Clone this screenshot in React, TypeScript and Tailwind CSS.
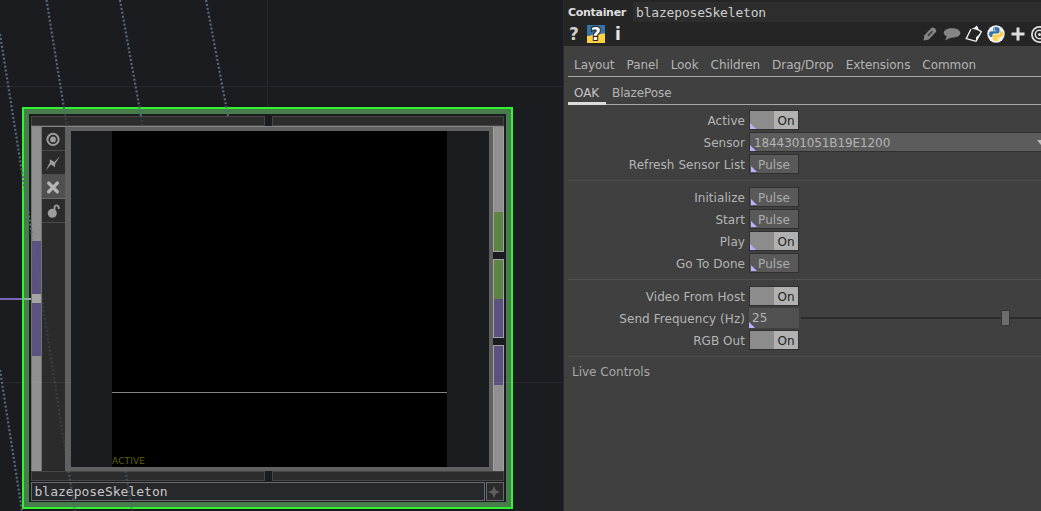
import type { ReactNode } from 'react';

const pages = ['Layout', 'Panel', 'Look', 'Children', 'Drag/Drop', 'Extensions', 'Common'];

// Wires that run behind and across the node
const wires = [
  { d: 'M0 34L32 235', opacity: 1 },
  { d: 'M32 235L66 455', opacity: 0.3 },
  { d: 'M66 455L75 511', opacity: 0.65 },
  { d: 'M0 370L22 511', opacity: 1 },
  { d: 'M46.5 0L65 114', opacity: 1 },
  { d: 'M65 114L70 147', opacity: 0.4 },
  { d: 'M125 467L132 511', opacity: 0.55 },
  { d: 'M120 0L141 116', opacity: 1 },
  { d: 'M141 116L143 130', opacity: 0.3 },
  { d: 'M206 0L228 116', opacity: 1 },
];

function Network() {
  return (
    <svg className="absolute inset-0" width="563" height="511" fill="none">
      <path d="M0 86.5H563M0 382.5H22M513 382.5H563M267.5 0V107" stroke="#27272f" />
      <path d="M31 382.5H71M489 382.5H513" stroke="#fff" strokeOpacity="0.06" />
      {wires.map((w) => (
        <path key={w.d} d={w.d} stroke="#586976" strokeWidth="2.2" strokeDasharray="2 2" opacity={w.opacity} />
      ))}
      <path d="M0 299H22" stroke="#7b64b4" strokeWidth="2" />
      <path d="M24 299H31" stroke="#8fa8ae" strokeWidth="2" />
    </svg>
  );
}

function Flag({ active, children }: { active?: boolean; children: ReactNode }) {
  return (
    <div className={`flex h-6 items-center justify-center border-b pr-[2px] ${active ? 'border-[#6a6a6a] bg-[#505050]' : 'border-[#4b4b4b] bg-[#2b2b2b]'}`}>
      <svg width="16" height="16" viewBox="0 0 16 16" fill="none">{children}</svg>
    </div>
  );
}

function BarPair() {
  return (
    <div className="flex h-[10px] gap-[7px]">
      <div className="w-[234px] border border-[#464646] bg-[#2c2c2c]" />
      <div className="flex-1 border border-[#464646] bg-[#2c2c2c]" />
    </div>
  );
}

function Node() {
  return (
    <div className="absolute left-[22px] top-[107px] flex h-[402px] w-[491px] flex-col border-2 border-[#32f332] bg-[#467d4b] p-[5px]">
      <div className="flex min-h-0 flex-1 flex-col bg-[#1b1c20] pt-[2px] pr-[2px] pb-[1px] pl-[2px]">
        <BarPair />
        <div className="flex h-[345px] border-t border-[#858585]">
          <div className="flex w-[11px] flex-col border-x border-[#737373] bg-[#909090]">
            <div className="mt-[114px] h-[53px] bg-[#5b5280]" />
            <div className="h-[9px] bg-[#a5a5a5]" />
            <div className="h-[53px] bg-[#5b5280]" />
          </div>
          <div className="w-[23px] bg-[#2b2b2b]">
            <Flag>
              <circle cx="8" cy="8.4" r="5.6" stroke="#9d9d9d" strokeWidth="2" />
              <circle cx="8" cy="8.4" r="2.9" fill="#9d9d9d" />
            </Flag>
            <Flag>
              <path d="M15.2 1L10.2 8.8L10 12.2L6 9.4L0.8 15.6L4.8 7.6V4.2L9.4 7Z" fill="#9d9d9d" />
            </Flag>
            <Flag active>
              <path d="M3.7 4.1L12.3 12.7M12.3 4.1L3.7 12.7" stroke="#b5b5b5" strokeWidth="3.4" strokeLinecap="round" />
            </Flag>
            <Flag>
              <circle cx="7.3" cy="10.3" r="4.5" fill="#9d9d9d" />
              <path d="M9.5 7.5V4.5Q9.7 2.3 11.8 2.4Q14 2.6 13.8 6" stroke="#9d9d9d" strokeWidth="1.8" />
            </Flag>
          </div>
          <div className="flex flex-1 border-x-[5px] border-y-[4px] border-r-[4px] border-l-[6px] border-[#606060] bg-[#1b1c20] pl-[41px]">
            <div className="flex w-[335px] flex-col bg-black">
              <div className="h-[261px]" />
              <div className="h-px bg-[#858585]" />
              <span className="mt-[63px] font-['DejaVu_Sans'] text-[9px] leading-[10px] tracking-[0.15px] text-[#626200]">ACTIVE</span>
            </div>
          </div>
          <div className="flex w-[11px] flex-col">
            <div className="h-[85px] border-x border-[#a2a2a2] bg-[#909090]" />
            <div className="h-10 border border-t-0 border-[#a2a2a2] bg-[#5f8546]" />
            <div className="h-[7px]" />
            <div className="h-10 border border-b-0 border-[#a2a2a2] bg-[#5f8546]" />
            <div className="h-[39px] border border-t-0 border-[#a2a2a2] bg-[#5b5280]" />
            <div className="h-[7px]" />
            <div className="h-10 border border-b-0 border-[#a2a2a2] bg-[#5b5280]" />
            <div className="flex-1 border-x border-[#a2a2a2] bg-[#909090]" />
          </div>
        </div>
        <BarPair />
        <div className="mt-px flex h-[19px] gap-px">
          <div className="flex flex-1 items-center border border-[#6b6b6f] bg-[#27282b] pl-[2.5px] font-['DejaVu_Sans_Mono'] text-[13px] leading-none text-[#c8c8c8]">
            blazeposeSkeleton
          </div>
          <div className="flex w-[18px] items-center justify-center border border-[#6b6b6f] bg-[#2b2b2b] pr-[2px]">
            <svg width="12" height="12" viewBox="0 0 12 12">
              <path d="M6 0L7.8 4.2L12 6L7.8 7.8L6 12L4.2 7.8L0 6L4.2 4.2Z" fill="#606060" />
            </svg>
          </div>
        </div>
      </div>
    </div>
  );
}

function PythonMark() {
  return (
    <svg width="18" height="18" viewBox="0 0 18 18">
      <circle cx="9" cy="9" r="8.7" fill="#f1f1f1" />
      <path d="M9 2C6.3 2 6 3.2 6 4.3V5.5H9.3V6.2H4.5C2.8 6.2 2 7.5 2 9S2.7 12 4.3 12H5.4V10.4C5.4 9 6.5 8.4 7.5 8.4H10.6C11.8 8.4 12.5 7.5 12.5 6.5V4.2C12.5 2.7 11 2 9 2Z" fill="#3572a5" />
      <path d="M9.2 16C11.9 16 12.2 14.8 12.2 13.7V12.5H8.9V11.9H13.7C15.4 11.9 16.2 10.6 16.2 9.1S15.5 6.1 13.9 6.1H13V7.6C13 9 11.9 9.6 10.9 9.6H7.8C6.6 9.6 5.9 10.5 5.9 11.5V13.8C5.9 15.3 7.2 16 9.2 16Z" fill="#ffd140" />
      <circle cx="7.4" cy="3.8" r=".7" fill="#fff" />
      <circle cx="10.8" cy="14.2" r=".7" fill="#fff" />
    </svg>
  );
}

function Toolbar() {
  return (
    <div className="flex h-6 items-center pl-[5px]">
      <span className="w-[18px] text-[17px] leading-none font-bold text-[#cfcfcf]">?</span>
      <svg width="18" height="18" viewBox="0 0 18 18">
        <path d="M0 0H18V18H0Z" fill="#ffd140" />
        <path d="M0 0H18V8.5Q14 8 12.5 9.5H5.5Q4 11.5 0 10.8Z" fill="#3572a5" />
        <text x="9" y="15.3" textAnchor="middle" fontSize="17" fontWeight="700" fill="#fff" stroke="#252525" strokeWidth="2.2" paintOrder="stroke">?</text>
      </svg>
      <span className="ml-[10px] text-[17px] leading-none font-bold text-[#e6e6e6]">i</span>
      <div className="ml-auto mr-[-8px] flex items-center">
        <svg width="14" height="14" viewBox="0 0 14 14">
          <path d="M0.5 13.5L1.4 8.3L8.5 0.8Q10 -0.2 12 1.4Q14 3.2 12.8 5L5.8 12.4Z" fill="#858585" />
          <path d="M5 8.8L9.3 4.3" stroke="#303030" strokeWidth="1.3" />
        </svg>
        <svg className="ml-[6px]" width="18" height="14" viewBox="0 0 18 14">
          <path d="M9 1.2C4.3 1.2 0.7 3.1 0.7 6Q0.7 8 3.7 9.4L2.2 13.2L8 10.7C13 10.9 17.3 8.9 17.3 6S13.5 1.2 9 1.2Z" fill="#858585" />
        </svg>
        <svg className="ml-[4px]" width="18" height="18" viewBox="0 0 18 18" fill="none">
          <path d="M6 4L1.2 13.6L11 16.3L16.3 6.8L13 4.6" stroke="#f2f2f2" strokeWidth="1.3" />
          <path d="M16.5 7.5L11 16.5V12.3Z" fill="#f2f2f2" />
          <path d="M6.5 3.6L9.8 2.4L11.5 0.5L13 2.2L13.6 5.6Z" fill="#f2f2f2" />
        </svg>
        <span className="ml-[4px]"><PythonMark /></span>
        <svg className="ml-[6px]" width="14" height="14" viewBox="0 0 14 14">
          <path d="M5.5 0.5H8.5V5.5H13.5V8.5H8.5V13.5H5.5V8.5H0.5V5.5H5.5Z" fill="#dedede" />
        </svg>
        <svg className="ml-[5px]" width="19" height="19" viewBox="0 0 19 19" fill="none" stroke="#dedede">
          <circle cx="9.5" cy="9.5" r="7.6" strokeWidth="1.8" />
          <circle cx="9.5" cy="9.5" r="4.2" strokeWidth="1.6" />
          <circle cx="9.5" cy="9.5" r="1.5" fill="#dedede" stroke="none" />
        </svg>
      </div>
    </div>
  );
}

function Row({ label, children }: { label: string; children: ReactNode }) {
  return (
    <div className="flex h-[22px] items-center">
      <span className="mr-[4px] w-[181px] pt-px text-right tracking-[0.06px]">{label}</span>
      {children}
    </div>
  );
}

// Lavender corner on parameters that differ from their default
function Corner({ inset }: { inset?: boolean }) {
  return (
    <svg className={`absolute ${inset ? 'bottom-px left-px' : 'bottom-0 left-0'}`} width="6" height="6">
      <path d="M0 0L6 6H0Z" fill="#beaeff" />
    </svg>
  );
}

function Toggle({ changed }: { changed?: boolean }) {
  return (
    <div className="relative flex h-5 w-[50px] border border-[#303030] bg-[#8c8c8c]">
      <span className="ml-auto w-6 bg-[#b1b1b1] text-center leading-[20px] text-[#222]">On</span>
      {changed && <Corner />}
    </div>
  );
}

function Pulse() {
  return (
    <div className="relative h-5 w-[50px] border border-[#303030] bg-[#595959] pl-[8px] leading-[20px] tracking-[0.1px] text-[#acacac]">
      Pulse
      <Corner inset />
    </div>
  );
}

function Divider() {
  return <div className="mt-[5px] mb-[5px] ml-[4px] h-px bg-[#505050]" />;
}

function Parameters() {
  return (
    <div className="flex w-[478px] shrink-0 flex-col overflow-hidden border-l border-[#292933] bg-[#404040] font-['DejaVu_Sans'] text-[12px] leading-none text-[#b5b5b5]">
      <div className="h-[46px] bg-[#252525]">
        <div className="flex h-[22px] pt-[2px]">
          <span className="w-[69px] pt-[5px] pl-1 text-[11px] font-bold tracking-[-0.3px] text-[#dedede]">Container</span>
          <span className="flex-1 bg-[#2d2d2d] pt-[4px] pl-[3px] font-['DejaVu_Sans_Mono'] text-[13px] leading-none tracking-[-0.18px] text-[#cecece]">
            blazeposeSkeleton
          </span>
        </div>
        <Toolbar />
      </div>
      <div className="ml-1 flex h-[31px] shrink-0 gap-[12px] border-b border-[#a8a8a8] pt-[13px] pl-[6px] tracking-[-0.05px]">
        {pages.map((page) => (
          <span key={page}>{page}</span>
        ))}
      </div>
      <div className="ml-1 flex h-[28px] shrink-0 border-b border-[#a8a8a8] tracking-[-0.1px]">
        <span className="relative w-[38px] pt-[10px] pl-[6px] text-[#c4c4c4]">
          OAK
          <i className="absolute bottom-[-1px] left-0 h-[3px] w-full bg-[#dcdcdc]" />
        </span>
        <span className="pt-[10px] pl-[6px]">BlazePose</span>
      </div>
      <div className="pt-[4px]">
        <Row label="Active"><Toggle changed /></Row>
        <Row label="Sensor">
          <div className="relative flex h-5 flex-1 items-center border border-r-0 border-[#303030] bg-[#5c5c5c] pt-px pl-[4px] tracking-[-0.1px]">
            1844301051B19E1200
            <svg className="mr-[-4px] ml-auto" width="8" height="5"><path d="M0 0H8L4 5Z" fill="#bbb" /></svg>
            <Corner />
          </div>
        </Row>
        <Row label="Refresh Sensor List"><Pulse /></Row>
        <Divider />
        <Row label="Initialize"><Pulse /></Row>
        <Row label="Start"><Pulse /></Row>
        <Row label="Play"><Toggle changed /></Row>
        <Row label="Go To Done"><Pulse /></Row>
        <Divider />
        <Row label="Video From Host"><Toggle /></Row>
        <Row label="Send Frequency (Hz)">
          <div className="relative h-5 w-[50px] bg-[#515151] pl-[3px] leading-[21px]">
            25
            <Corner />
          </div>
          <div className="ml-[2px] flex flex-1 items-center">
            <div className="h-[2px] w-[200px] bg-[#2b2b2b]" />
            <div className="h-4 w-[9px] border border-[#353535] bg-[#6d6d6d]" />
            <div className="h-[2px] flex-1 bg-[#2b2b2b]" />
          </div>
        </Row>
        <Row label="RGB Out"><Toggle /></Row>
        <Divider />
        <div className="flex h-[19px] items-center pl-[8px] text-[#a8a8a8]">Live Controls</div>
      </div>
    </div>
  );
}

export default function App() {
  return (
    <div className="flex h-[511px] w-[1041px] overflow-hidden bg-[#1b1c20]">
      <div className="relative w-[563px] shrink-0">
        <Node />
        <Network />
      </div>
      <Parameters />
    </div>
  );
}
